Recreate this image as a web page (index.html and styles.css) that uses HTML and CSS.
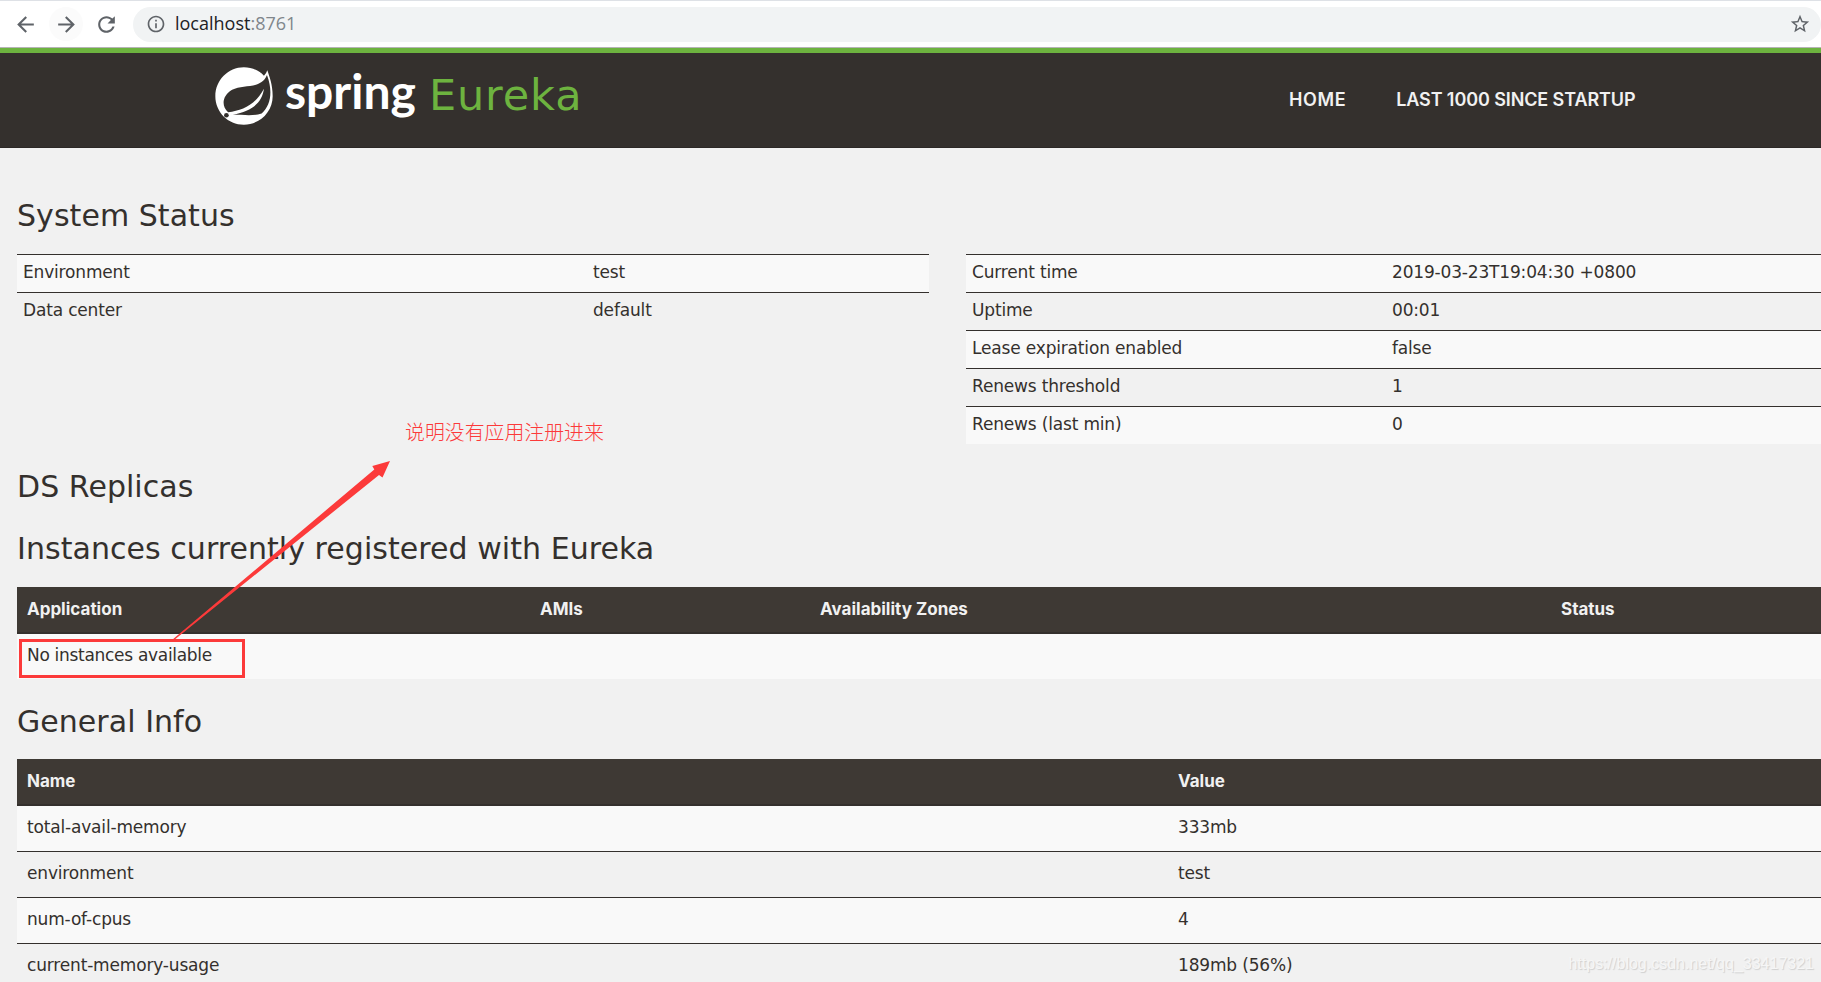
FILE: index.html
```
<!DOCTYPE html>
<html lang="en">
<head>
    <meta charset="UTF-8">
    <meta name="viewport" content="width=device-width, initial-scale=1.0">
    <title>Eureka</title>
    <link rel="stylesheet" href="styles.css">
</head>
<body>
    <!-- browser bar -->
    <div class="toolbar">
        <div class="tool-btn">
            <svg viewBox="0 0 24 24" width="25" height="25"><path d="M20 11H7.83l5.59-5.59L12 4l-8 8 8 8 1.41-1.41L7.83 13H20v-2z"/></svg>
        </div>
        <div class="tool-btn hover">
            <svg viewBox="0 0 24 24" width="25" height="25"><path d="M12 4l-1.41 1.41L16.17 11H4v2h12.17l-5.58 5.59L12 20l8-8z"/></svg>
        </div>
        <div class="tool-btn reload">
            <svg viewBox="0 0 24 24" width="25" height="25"><path d="M17.65 6.35C16.2 4.9 14.21 4 12 4c-4.42 0-7.99 3.58-7.99 8s3.57 8 7.99 8c3.73 0 6.84-2.55 7.73-6h-2.08c-.82 2.33-3.04 4-5.65 4-3.31 0-6-2.69-6-6s2.69-6 6-6c1.66 0 3.14.69 4.22 1.78L13 11h7V4l-2.35 2.35z"/></svg>
        </div>
        <div class="address">
            <svg viewBox="0 0 24 24" width="20" height="20"><path d="M11 17h2v-6h-2v6zm1-15C6.48 2 2 6.48 2 12s4.480 10 10 10 10-4.480 10-10S17.520 2 12 2zm0 18c-4.410 0-8-3.590-8-8s3.590-8 8-8 8 3.590 8 8-3.590 8-8 8zM11 9h2V7h-2v2z"/></svg>
            <span class="url">localhost<span class="port">:8761</span></span>
            <svg class="star" viewBox="0 0 24 24" width="22" height="22"><path d="M22 9.240l-7.190-.620L12 2 9.190 8.630 2 9.240l5.460 4.730L5.820 21 12 17.270 18.180 21l-1.630-7.030L22 9.240zM12 15.400l-3.760 2.270 1-4.280-3.320-2.880 4.380-.380L12 6.100l1.710 4.040 4.380.380-3.320 2.880 1 4.280L12 15.400z"/></svg>
        </div>
    </div>

    <div class="navbar">
        <div class="brand">
            <svg class="leaf" viewBox="47 38 173 173" width="58" height="58">
                <path fill="#fff" d="M203 48C209 66 219 90 219 125C219 172 180 210 133 210C86 210 48 172 48 125C48 78 86 39 133 39C157 39 178 48 193 64Q200 58 203 48z"/>
                <path fill="#34302d" d="M202 62C184 106 132 88 98 106C70 122 64 154 86 173C130 168 168 150 193 103C188 142 160 170 100 180C140 182 165 184 186 177C214 152 220 110 202 62z"/>
                <circle fill="#34302d" cx="81" cy="182" r="7"/>
            </svg>
            <span class="brand-spring">spring</span>
            <span class="brand-eureka">Eureka</span>
        </div>
        <div class="nav">
            <a class="nav-home">HOME</a>
            <a>LAST 1000 SINCE STARTUP</a>
        </div>
    </div>

    <div class="content">
        <h1 class="first">System Status</h1>
        <div class="status">
            <table class="condensed left">
                <tr><td class="key">Environment</td><td>test</td></tr>
                <tr><td>Data center</td><td>default</td></tr>
            </table>
            <table class="condensed right">
                <tr><td class="key">Current time</td><td>2019-03-23T19:04:30 +0800</td></tr>
                <tr><td>Uptime</td><td>00:01</td></tr>
                <tr><td>Lease expiration enabled</td><td>false</td></tr>
                <tr><td>Renews threshold</td><td>1</td></tr>
                <tr><td>Renews (last min)</td><td>0</td></tr>
            </table>
        </div>

        <h1>DS Replicas</h1>

        <h1 class="instances-title">Instances currently registered with Eureka</h1>
        <table class="striped">
            <thead>
                <tr><th class="col-app">Application</th><th class="col-ami">AMIs</th><th class="col-zone">Availability Zones</th><th>Status</th></tr>
            </thead>
            <tbody>
                <tr><td class="empty" colspan="4">No instances available</td></tr>
            </tbody>
        </table>

        <h1>General Info</h1>
        <table class="striped">
            <thead>
                <tr><th class="col-name">Name</th><th>Value</th></tr>
            </thead>
            <tbody>
                <tr><td>total-avail-memory</td><td>333mb</td></tr>
                <tr><td>environment</td><td>test</td></tr>
                <tr><td>num-of-cpus</td><td>4</td></tr>
                <tr><td>current-memory-usage</td><td>189mb (56%)</td></tr>
            </tbody>
        </table>
    </div>

    <!-- annotations -->
    <div class="note" lang="zh">说明没有应用注册进来</div>
    <div class="mark-box"></div>
    <svg class="arrow" viewBox="0 0 230 190" width="230" height="190">
        <path fill="#fc3a3a" d="M230 1L212.300 6L214.300 9.500L12 180L13.500 180.500L219 15L222.500 17.500z"/>
    </svg>
    <div class="watermark">https://blog.csdn.net/qq_33417321</div>
</body>
</html>
```
FILE: styles.css
```
* { box-sizing: border-box; }
body {
    margin: 0;
    height: 982px;
    overflow: hidden;
    position: relative;
    background: #f1f1f1;
    color: #34302d;
    font: 17px/20px "DejaVu Sans", sans-serif;
    letter-spacing: -0.17px;
}

/* browser bar */
.toolbar {
    display: flex;
    align-items: center;
    height: 48px;
    padding-left: 8px;
    background: #fff;
    border-top: 1px solid #dee1e6;
    border-bottom: 1px solid #b6b4b6;
}
.toolbar svg { display: block; fill: #5f6368; }
.tool-btn {
    display: flex;
    align-items: center;
    justify-content: center;
    width: 34px;
    height: 34px;
    margin-right: 7px;
    border-radius: 50%;
}
.tool-btn.hover { background: #fbfbfb; }
.tool-btn.reload { margin: 0 8px 0 -1px; }
.address {
    display: flex;
    align-items: center;
    flex: 1;
    height: 35px;
    margin-left: 2px;
    padding: 0 10px 0 13px;
    border-radius: 18px;
    background: #f1f3f4;
}
.url {
    margin: -2px 0 0 9px;
    color: #202124;
    font: 18px/24px "Open Sans", sans-serif;
    letter-spacing: 0;
}
.port { color: #80868b; }
.star { margin-left: auto; }

/* header */
.navbar {
    display: flex;
    height: 100px;
    padding-left: 215px;
    background: #34302d;
    border-top: 5px solid #6db33f;
    border-bottom: 1px solid #2c2826;
}
.brand { display: flex; align-items: flex-start; width: 1074px; }
.leaf { margin-top: 14px; }
.brand-spring {
    margin: 8px 0 0 12px;
    color: #fff;
    font: 700 48px/60px Lato, sans-serif;
    letter-spacing: 0;
}
.brand-eureka {
    margin: 12px 0 0 13px;
    color: #6db33f;
    font: 43px/60px "DejaVu Sans", sans-serif;
    letter-spacing: 0.9px;
}
.nav {
    display: flex;
    gap: 50px;
    padding-top: 36px;
    color: #f1f1f1;
    font: 600 18px/22px Inter, sans-serif;
    letter-spacing: -0.1px;
}
.nav-home { letter-spacing: 0.6px; }

/* page */
.content { padding-left: 17px; }
h1 {
    margin: 24px 0 18px;
    font: 30px/38px "DejaVu Sans", sans-serif;
    letter-spacing: 0.05px;
}
h1.first { margin: 49px 0 19px; }
h1.instances-title { margin: 24px 0 19px; }
.status { display: flex; align-items: flex-start; gap: 37px; }
table { border-collapse: separate; border-spacing: 0; table-layout: fixed; }
td, th { text-align: left; vertical-align: top; }
tr:nth-child(odd) td { background: #f9f9f9; }
.condensed td { padding: 7px 6px 10px; border-top: 1px solid #34302d; }
.condensed.left { width: 912px; }
.condensed.left .key { width: 570px; }
.condensed.right { width: 855px; }
.condensed.right .key { width: 420px; }
.striped { width: 100%; }
.striped th {
    padding: 12px 10px 13px;
    color: #f1f1f1;
    background: #3e3934;
    border-bottom: 2px solid #34302d;
    font-family: Inter, sans-serif;
    letter-spacing: 0;
}
.striped td { padding: 11px 10px 14px; }
.striped td.empty { letter-spacing: -0.3px; }
.striped tr + tr td { border-top: 1px solid #34302d; }
.col-app { width: 513px; }
.col-ami { width: 280px; }
.col-zone { width: 741px; }
.col-name { width: 1151px; }

/* annotations lie over the page */
.note {
    position: absolute;
    left: 405px;
    top: 417px;
    color: #fc3a3a;
    font: 300 19.9px/30px "Noto Sans CJK SC", sans-serif;
    letter-spacing: 0;
}
.mark-box {
    position: absolute;
    left: 19px;
    top: 639px;
    width: 226px;
    height: 39px;
    border: 3px solid #fc3a3a;
}
.arrow { position: absolute; left: 160px; top: 460px; }
.watermark {
    position: absolute;
    right: 7px;
    top: 954px;
    color: #f6f6f6;
    font: 16px/20px "Liberation Sans", sans-serif;
    letter-spacing: 0;
    text-shadow: 1px 1px 1px #cfcfcf;
}
```
